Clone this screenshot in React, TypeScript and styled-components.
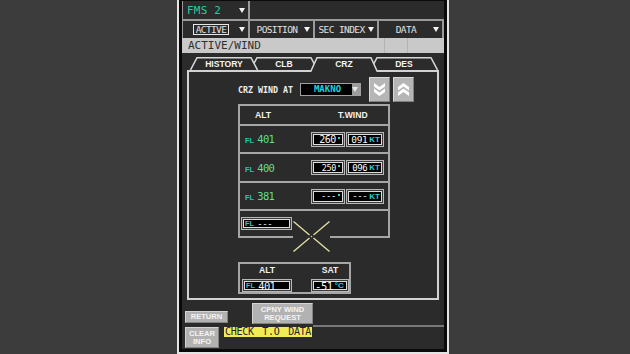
import React from 'react'
import styled, { createGlobalStyle } from 'styled-components'

const MONO = `'DejaVu Sans Mono', 'Liberation Mono', monospace`
const SANS = `'Liberation Sans', Arial, sans-serif`
const BG = '#2b2b2b'
const TEAL = '#1fc9b2'
const GREEN = '#62de8c'
const CYAN = '#22d2dc'

const GlobalStyle = createGlobalStyle`
  html, body {
    margin: 0;
    padding: 0;
    background: #3c3c3c;
  }
  body {
    width: 630px;
    height: 354px;
    overflow: hidden;
    font-family: ${MONO};
  }
`

const Page = styled.div`
  width: 630px;
  height: 354px;
  box-sizing: border-box;
  padding-left: 177px;
  background: #3c3c3c;
  display: flex;
`

const Panel = styled.div`
  width: 272px;
  height: 354px;
  box-sizing: border-box;
  border: 2px solid #e4e4e4;
  border-top: none;
  background: #0a0a0a;
  padding: 1px 3px 3px 3px;
`

const Screen = styled.div`
  height: 100%;
  background: ${BG};
  display: flex;
  flex-direction: column;
`

/* ---------- header ---------- */

const TopRow = styled.div`
  display: flex;
  height: 18px;
`

const FmsCell = styled.div`
  width: 68px;
  box-sizing: border-box;
  border-left: 1px solid #9a9a9a;
  border-right: 2px solid #9a9a9a;
  display: flex;
  align-items: center;
  justify-content: space-between;
  padding: 0 2px 0 4px;
  color: #22cfa0;
  font-size: 11px;
  letter-spacing: 0.2px;
`

const MenuRow = styled.div`
  display: flex;
  height: 19px;
  box-sizing: border-box;
  border-top: 2px solid #9a9a9a;
`

const MenuCell = styled.div<{ $w: number }>`
  width: ${p => p.$w}px;
  box-sizing: border-box;
  border-right: 2px solid #9a9a9a;
  display: flex;
  align-items: center;
  padding-right: 2px;
  color: #e2e2e2;
  font-size: 9.5px;
  letter-spacing: -0.6px;
  &:first-child {
    border-left: 1px solid #9a9a9a;
  }
`

const MenuLabel = styled.span`
  flex: 1;
  text-align: center;
  white-space: nowrap;
`

const Boxed = styled.span`
  display: inline-block;
  border: 1px solid #e6e6e6;
  padding: 0 2px;
  line-height: 9px;
`

const Caret = styled.span<{ $color?: string }>`
  width: 0;
  height: 0;
  border-left: 3px solid transparent;
  border-right: 3px solid transparent;
  border-top: 5px solid ${p => p.$color || '#f4f4f4'};
  margin-right: 1px;
`

const TitleBar = styled.div`
  height: 15px;
  background: #c9c9c9;
  color: #303030;
  font-size: 11px;
  line-height: 15px;
  padding-left: 6px;
  display: flex;
`

const TitleText = styled.span`
  flex: 1;
`

const TitleSeg = styled.span`
  width: 22px;
  border-left: 1px solid #b4b4b4;
  &:last-child {
    width: 36px;
  }
`

/* ---------- tabs ---------- */

const TabZone = styled.div`
  padding: 0 5px;
`

const TabsRow = styled.div`
  position: relative;
  z-index: 2;
  height: 17px;
  display: flex;
  align-items: flex-end;
  padding-left: 3px;
`

const TabBox = styled.div<{ $active?: boolean; $z: number }>`
  position: relative;
  z-index: ${p => p.$z};
  width: 68px;
  height: ${p => (p.$active ? 15 : 13)}px;
  margin-bottom: ${p => (p.$active ? -2 : 0)}px;
  padding-bottom: ${p => (p.$active ? 2 : 0)}px;
  box-sizing: border-box;
  margin-left: -8px;
  display: flex;
  align-items: center;
  justify-content: center;
  &:first-child {
    margin-left: 0;
  }
  svg {
    position: absolute;
    left: 0;
    top: 0;
  }
`

const TabLabel = styled.span`
  position: relative;
  color: #f4f4f4;
  font-family: ${SANS};
  font-weight: bold;
  font-size: 8.6px;
  padding-top: 1px;
`

const Frame = styled.div`
  position: relative;
  z-index: 1;
  height: 230px;
  box-sizing: border-box;
  border: 2px solid #d2d2d2;
  padding: 5px 0 0 49px;
`

/* ---------- crz wind row ---------- */

const CrzRow = styled.div`
  display: flex;
  align-items: center;
  height: 25px;
`

const CrzLabel = styled.span`
  color: #f0f0f0;
  font-size: 8.3px;
  font-weight: bold;
  margin-right: 7px;
  white-space: pre;
`

const Select = styled.div`
  width: 61px;
  height: 13px;
  box-sizing: border-box;
  border: 1px solid #a0a0a0;
  background: #000;
  display: flex;
  margin-right: 8px;
`

const SelectText = styled.span`
  flex: 1;
  color: ${CYAN};
  font-size: 9px;
  font-weight: bold;
  line-height: 11px;
  padding-left: 13px;
`

const SelectArrow = styled.span`
  width: 8px;
  background: #9c9c9c;
  display: flex;
  align-items: center;
  justify-content: center;
`

const IconButton = styled.div`
  width: 21px;
  height: 25px;
  box-sizing: border-box;
  background: #b6b6b6;
  border: 1px solid;
  border-color: #d8d8d8 #808080 #808080 #d8d8d8;
  display: flex;
  align-items: center;
  justify-content: center;
  & + & {
    margin-left: 3px;
  }
`

/* ---------- wind table ---------- */

const Table = styled.div`
  position: relative;
  margin-top: 2px;
  width: 152px;
  box-sizing: border-box;
  border: 2px solid #a6a6a6;
`

const HeadRow = styled.div`
  height: 18px;
  display: flex;
  align-items: center;
  color: #f2f2f2;
  font-family: ${SANS};
  font-weight: bold;
  font-size: 8.6px;
`

const HeadAlt = styled.span`
  width: 98px;
  padding-left: 15px;
  box-sizing: border-box;
`

const Row = styled.div<{ $h: number }>`
  height: ${p => p.$h}px;
  border-top: 2px solid #a6a6a6;
  display: flex;
  align-items: center;
`

const AltCell = styled.div<{ $pl?: number }>`
  width: 71px;
  padding-left: ${p => (p.$pl === undefined ? 5 : p.$pl)}px;
  box-sizing: border-box;
  display: flex;
  align-items: baseline;
`

const FlTag = styled.span`
  color: ${TEAL};
  font-family: ${SANS};
  font-weight: bold;
  font-size: 7.5px;
  margin-right: 3px;
`

const FlValue = styled.span<{ $color?: string }>`
  color: ${p => p.$color || GREEN};
  font-size: 10.5px;
  letter-spacing: -0.6px;
`

const Field = styled.div<{ $w: number; $h?: number; $justify?: string }>`
  width: ${p => p.$w}px;
  height: ${p => p.$h || 15}px;
  box-sizing: border-box;
  border: 1px solid #b8b8b8;
  background: #000;
  box-shadow: inset 0 0 0 1px #3a3a3a, inset 0 0 0 2px #dcdcdc;
  display: flex;
  align-items: center;
  justify-content: ${p => p.$justify || 'flex-end'};
  padding: 0 3px 0 3px;
  overflow: hidden;
  & + & {
    margin-left: 1px;
  }
`

const Value = styled.span<{ $size?: number }>`
  color: #fafafa;
  font-size: ${p => p.$size || 10}px;
  letter-spacing: -0.4px;
  white-space: nowrap;
`

const Deg = styled.span`
  align-self: flex-start;
  width: 2px;
  height: 2px;
  margin: 4px 1px 0 2px;
  background: ${CYAN};
`

const Unit = styled.span`
  color: ${CYAN};
  font-family: ${SANS};
  font-weight: bold;
  font-size: 8px;
  margin-left: 2px;
`

const CrossMark = styled.svg`
  position: absolute;
  left: 53px;
  top: 115px;
`

/* ---------- alt / sat ---------- */

const SatBox = styled.div`
  margin-top: 24px;
  width: 113px;
  height: 32px;
  box-sizing: border-box;
  border: 2px solid #a6a6a6;
  display: flex;
`

const SatCol = styled.div<{ $ml: number }>`
  margin-left: ${p => p.$ml}px;
  display: flex;
  flex-direction: column;
  align-items: center;
`

const SatHead = styled.span`
  height: 15px;
  line-height: 13px;
  color: #f2f2f2;
  font-family: ${SANS};
  font-weight: bold;
  font-size: 8.6px;
`

/* ---------- bottom ---------- */

const BottomRow = styled.div<{ $h: number }>`
  height: ${p => p.$h}px;
  display: flex;
  align-items: flex-start;
  padding-left: 3px;
`

const KeyButton = styled.div<{ $w: number; $h: number; $mt?: number; $ml?: number }>`
  width: ${p => p.$w}px;
  height: ${p => p.$h}px;
  margin-top: ${p => p.$mt || 0}px;
  margin-left: ${p => p.$ml || 0}px;
  box-sizing: border-box;
  background: #b2b2b2;
  border: 1px solid;
  border-color: #d4d4d4 #828282 #828282 #d4d4d4;
  color: #f4f4f4;
  font-family: ${SANS};
  font-weight: bold;
  font-size: 7.6px;
  line-height: 8px;
  display: flex;
  flex-direction: column;
  align-items: center;
  justify-content: center;
  text-align: center;
`

const Rule = styled.div`
  flex: 1;
  height: 2px;
  margin-top: 25px;
  background: #777;
`

const Message = styled.div`
  margin-left: 5px;
  width: 88px;
  height: 10px;
  background: #f1ec55;
  color: #262626;
  font-size: 10px;
  line-height: 10px;
  padding-left: 1px;
  box-sizing: border-box;
  white-space: nowrap;
  overflow: hidden;
  letter-spacing: -0.3px;
  word-spacing: 3px;
`

/* ---------- icons ---------- */

const Chevrons = ({ up }: { up?: boolean }) => (
  <svg width="11" height="13" viewBox="0 0 11 13" style={up ? { transform: 'scaleY(-1)' } : undefined}>
    <polygon points="0,0 5.5,4 11,0 11,3.5 5.5,7.5 0,3.5" fill="#fff" />
    <polygon points="0,5.5 5.5,9.5 11,5.5 11,9 5.5,13 0,9" fill="#fff" />
  </svg>
)

const TabShape = ({ h, active }: { h: number; active?: boolean }) => (
  <svg width="68" height={h} viewBox={`0 0 68 ${h}`}>
    <polygon points={`0,${h} 7,0.75 61,0.75 68,${h}`} fill={BG} />
    <polyline
      points={`0.5,${active ? h : 13} 7,0.75 61,0.75 67.5,${active ? h : 13}`}
      fill="none"
      stroke="#d8d8d8"
      strokeWidth="1.5"
    />
  </svg>
)

const Tab = ({ label, active, z }: { label: string; active?: boolean; z: number }) => (
  <TabBox $active={active} $z={z}>
    <TabShape h={active ? 15 : 13} active={active} />
    <TabLabel>{label}</TabLabel>
  </TabBox>
)

const menus = [
  { w: 68, label: <Boxed>ACTIVE</Boxed> },
  { w: 65, label: 'POSITION' },
  { w: 64, label: 'SEC INDEX' },
  { w: 65, label: 'DATA' },
]

const winds = [
  { h: 26, alt: '401', dir: '260', spd: '091', size: 10, spdSize: 9.5 },
  { h: 27, alt: '400', dir: '250', spd: '096', size: 8.5, spdSize: 9 },
  { h: 26, alt: '381', dir: '---', spd: '---', size: 9, spdSize: 9 },
]

const App = () => {
  return (
    <Page>
      <GlobalStyle />
      <Panel>
        <Screen>
          <TopRow>
            <FmsCell>
              <span>FMS 2</span>
              <Caret />
            </FmsCell>
          </TopRow>
          <MenuRow>
            {menus.map((m, i) => (
              <MenuCell key={i} $w={m.w}>
                <MenuLabel>{m.label}</MenuLabel>
                <Caret />
              </MenuCell>
            ))}
          </MenuRow>
          <TitleBar>
            <TitleText>ACTIVE/WIND</TitleText>
            <TitleSeg />
            <TitleSeg />
          </TitleBar>

          <TabZone>
            <TabsRow>
              <Tab label="HISTORY" z={4} />
              <Tab label="CLB" z={3} />
              <Tab label="CRZ" active z={6} />
              <Tab label="DES" z={5} />
            </TabsRow>
            <Frame>
              <CrzRow>
                <CrzLabel>CRZ WIND AT</CrzLabel>
                <Select>
                  <SelectText>MAKNO</SelectText>
                  <SelectArrow>
                    <Caret $color="#e8e8e8" />
                  </SelectArrow>
                </Select>
                <IconButton>
                  <Chevrons />
                </IconButton>
                <IconButton>
                  <Chevrons up />
                </IconButton>
              </CrzRow>

              <Table>
                <HeadRow>
                  <HeadAlt>ALT</HeadAlt>
                  <span>T.WIND</span>
                </HeadRow>
                {winds.map(w => (
                  <Row key={w.alt} $h={w.h}>
                    <AltCell>
                      <FlTag>FL</FlTag>
                      <FlValue>{w.alt}</FlValue>
                    </AltCell>
                    <Field $w={34}>
                      <Value $size={w.size}>{w.dir}</Value>
                      <Deg />
                    </Field>
                    <Field $w={38}>
                      <Value $size={w.spdSize}>{w.spd}</Value>
                      <Unit>KT</Unit>
                    </Field>
                  </Row>
                ))}
                <Row $h={25}>
                  <AltCell $pl={1}>
                    <Field $w={51} $h={13} $justify="flex-start">
                      <FlTag>FL</FlTag>
                      <Value $size={9}>---</Value>
                    </Field>
                  </AltCell>
                </Row>
                <CrossMark width="37" height="31" viewBox="0 0 37 31">
                  <rect x="0" y="14.5" width="37" height="3" fill={BG} />
                  <g stroke="#e4e2a4" strokeWidth="1.3" fill="none">
                    <line x1="0.5" y1="0.5" x2="16.5" y2="14" />
                    <line x1="20.5" y1="17" x2="36.5" y2="30.5" />
                    <line x1="36.5" y1="0.5" x2="20.5" y2="14" />
                    <line x1="16.5" y1="17" x2="0.5" y2="30.5" />
                  </g>
                  <circle cx="18.5" cy="15.5" r="0.8" fill="#e4e2a4" />
                </CrossMark>
              </Table>

              <SatBox>
                <SatCol $ml={2}>
                  <SatHead>ALT</SatHead>
                  <Field $w={50} $h={13} $justify="flex-start">
                    <FlTag>FL</FlTag>
                    <FlValue $color="#f4f4f4">401</FlValue>
                  </Field>
                </SatCol>
                <SatCol $ml={19}>
                  <SatHead>SAT</SatHead>
                  <Field $w={38} $h={13} $justify="flex-start">
                    <Value $size={10.5}>-51</Value>
                    <Unit>°C</Unit>
                  </Field>
                </SatCol>
              </SatBox>
            </Frame>
          </TabZone>

          <BottomRow $h={27}>
            <KeyButton $w={43} $h={12} $mt={11}>RETURN</KeyButton>
            <KeyButton $w={61} $h={21} $mt={3} $ml={24}>
              <span>CPNY WIND</span>
              <span>REQUEST</span>
            </KeyButton>
            <Rule />
          </BottomRow>
          <BottomRow $h={21}>
            <KeyButton $w={34} $h={21}>
              <span>CLEAR</span>
              <span>INFO</span>
            </KeyButton>
            <Message>CHECK T.O DATA</Message>
          </BottomRow>
        </Screen>
      </Panel>
    </Page>
  )
}

export default App
